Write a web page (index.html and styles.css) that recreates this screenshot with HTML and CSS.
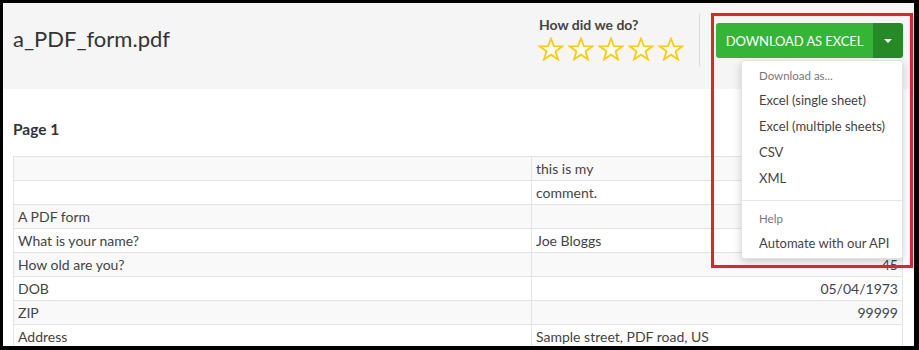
FILE: index.html
```html
<!DOCTYPE html>
<html>
<head>
<meta charset="utf-8">
<link rel="stylesheet" href="styles.css">
</head>
<body>
<div class="frame">
  <header class="top">
    <h1 class="title">a_PDF_form.pdf</h1>
    <div class="actions">
      <div class="rating">
        <div class="rating-label">How did we do?</div>
        <div class="stars">
          <svg class="star" viewBox="0 0 26 24"><path d="M13 1.5 L15.9 9.2 L24.2 9.4 L17.6 14.4 L20 22.4 L13 17.7 L6 22.4 L8.4 14.4 L1.8 9.4 L10.1 9.2 Z"/></svg>
          <svg class="star" viewBox="0 0 26 24"><path d="M13 1.5 L15.9 9.2 L24.2 9.4 L17.6 14.4 L20 22.4 L13 17.7 L6 22.4 L8.4 14.4 L1.8 9.4 L10.1 9.2 Z"/></svg>
          <svg class="star" viewBox="0 0 26 24"><path d="M13 1.5 L15.9 9.2 L24.2 9.4 L17.6 14.4 L20 22.4 L13 17.7 L6 22.4 L8.4 14.4 L1.8 9.4 L10.1 9.2 Z"/></svg>
          <svg class="star" viewBox="0 0 26 24"><path d="M13 1.5 L15.9 9.2 L24.2 9.4 L17.6 14.4 L20 22.4 L13 17.7 L6 22.4 L8.4 14.4 L1.8 9.4 L10.1 9.2 Z"/></svg>
          <svg class="star" viewBox="0 0 26 24"><path d="M13 1.5 L15.9 9.2 L24.2 9.4 L17.6 14.4 L20 22.4 L13 17.7 L6 22.4 L8.4 14.4 L1.8 9.4 L10.1 9.2 Z"/></svg>
        </div>
      </div>
      <div class="sep"></div>
      <div class="btn-group">
        <button class="btn-main">DOWNLOAD AS EXCEL</button>
        <button class="btn-caret"><span class="caret"></span></button>
        <ul class="menu">
          <li class="menu-head">Download as...</li>
          <li class="menu-item">Excel (single sheet)</li>
          <li class="menu-item">Excel (multiple sheets)</li>
          <li class="menu-item">CSV</li>
          <li class="menu-item">XML</li>
          <li class="menu-divider"></li>
          <li class="menu-head">Help</li>
          <li class="menu-item">Automate with our API</li>
        </ul>
      </div>
    </div>
  </header>
  <main class="content">
    <h2 class="page-title">Page 1</h2>
    <table class="grid">
      <tr><td></td><td>this is my</td></tr>
      <tr><td></td><td>comment.</td></tr>
      <tr><td>A PDF form</td><td></td></tr>
      <tr><td>What is your name?</td><td>Joe Bloggs</td></tr>
      <tr><td>How old are you?</td><td class="num">45</td></tr>
      <tr><td>DOB</td><td class="num">05/04/1973</td></tr>
      <tr><td>ZIP</td><td class="num">99999</td></tr>
      <tr><td>Address</td><td>Sample street, PDF road, US</td></tr>
    </table>
  </main>
  <div class="highlight"></div>
</div>
</body>
</html>
```

FILE: styles.css
```css
html, body {
  margin: 0;
  padding: 0;
  background: #000;
  height: 350px;
  overflow: hidden;
}
.frame {
  position: relative;
  margin: 3px 5px 0 3px;
  height: 343px;
  background: #fff;
  overflow: hidden;
  font-family: Lato, "Open Sans", sans-serif;
  color: #333;
}
.top {
  height: 86px;
  background: #f5f5f5;
  display: flex;
  justify-content: space-between;
  align-items: flex-start;
  padding: 0 11px 0 10px;
}
.title {
  margin: 21px 0 0 0;
  font-size: 22px;
  font-weight: 400;
  line-height: 30px;
  color: #333;
}
.actions {
  display: flex;
  align-items: flex-start;
}
.rating {
  margin-top: 13px;
  margin-right: 15px;
}
.rating-label {
  font-size: 14px;
  font-weight: 700;
  color: #444;
  line-height: 18px;
  padding-left: 1px;
}
.stars {
  display: flex;
  gap: 4px;
  margin-top: 3px;
}
.star {
  width: 26px;
  height: 24px;
  display: block;
}
.star path {
  fill: #fff;
  stroke: #ffcc00;
  stroke-width: 1.8;
  stroke-linejoin: miter;
}
.sep {
  width: 1px;
  height: 52px;
  background: #d9d9d9;
  margin-top: 11px;
  margin-right: 16px;
}
.btn-group {
  position: relative;
  display: flex;
  margin-top: 20px;
}
.btn-main, .btn-caret {
  border: 0;
  margin: 0;
  height: 35px;
  color: #fff;
  font-family: Lato, "Open Sans", sans-serif;
  cursor: pointer;
}
.btn-main {
  background: #35b535;
  width: 157px;
  font-size: 13px;
  padding: 0;
  border-radius: 3px 0 0 3px;
  letter-spacing: -0.1px;
}
.btn-caret {
  background: #258a25;
  width: 30px;
  border-radius: 0 3px 3px 0;
  display: flex;
  align-items: center;
  justify-content: center;
  padding: 0;
}
.caret {
  width: 0;
  height: 0;
  border-left: 4px solid transparent;
  border-right: 4px solid transparent;
  border-top: 4px solid #fff;
}
.menu {
  position: absolute;
  right: 0;
  top: 37px;
  width: 162px;
  margin: 0;
  padding: 4px 0 2px 0;
  list-style: none;
  background: #fff;
  border: 1px solid #e2e2e2;
  border-radius: 3px;
  box-shadow: 0 3px 8px rgba(0,0,0,0.18);
  box-sizing: border-box;
  z-index: 2;
}
.menu-head {
  font-size: 11.5px;
  color: #777;
  padding: 2px 17px;
  line-height: 18px;
}
.menu-item {
  font-size: 13px;
  color: #444;
  line-height: 26px;
  padding: 0 17px;
  white-space: nowrap;
}
.menu-divider {
  height: 1px;
  background: #e5e5e5;
  margin: 9px 0 7px 0;
}
.content {
  padding: 0 11px 0 10px;
}
.page-title {
  margin: 30px 0 0 0;
  font-size: 15.5px;
  font-weight: 700;
  line-height: 20px;
  color: #333;
  height: 37px;
}
.grid {
  width: 100%;
  border-collapse: collapse;
  font-size: 14px;
  color: #444;
}
.grid td {
  border: 1px solid #e3e3e3;
  height: 24px;
  padding: 0 4px;
  line-height: 22px;
  box-sizing: border-box;
}
.grid td:first-child {
  width: 518px;
}
.grid tr:nth-child(odd) td {
  background: #f9f9f9;
}
.grid td.num {
  text-align: right;
}
.highlight {
  position: absolute;
  left: 708px;
  top: 10px;
  width: 202px;
  height: 255px;
  border: 3px solid #e8202a;
  box-sizing: border-box;
  pointer-events: none;
  z-index: 3;
}
```
